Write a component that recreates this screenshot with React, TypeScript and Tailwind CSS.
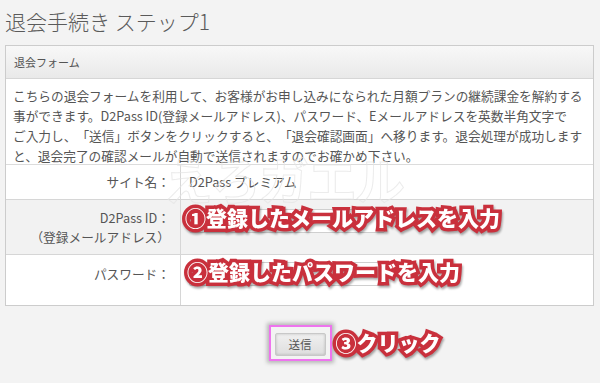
const jp = "font-['Noto_Sans_CJK_JP','Noto_Sans',sans-serif] [text-spacing-trim:space-all]";

const note =
  "font-['Noto_Sans_CJK_JP',sans-serif] font-black text-white whitespace-nowrap [-webkit-text-stroke:7px_#c9303c] [paint-order:stroke_fill] [filter:drop-shadow(1px_2px_1px_rgba(0,0,0,0.35))]";

function Field() {
  return <div className="h-[24px] w-[196px] border border-[#cfcfcf] bg-white rounded-[2px]" />;
}

export default function App() {
  return (
    <div className={`${jp} w-[600px] h-[383px] bg-[#f3f3f3] text-[#555] overflow-hidden relative`}>
      <h1 className="px-[5px] pt-[6px] h-[45px] text-[21px] leading-[30px] text-[#5a5a5a] font-light">
        退会手続き ステップ1
      </h1>

      <div className="mx-[5px] w-[589px] border border-[#cccccc] bg-white">
        <div className="h-[33px] flex items-center px-[8px] text-[11px] text-[#555] bg-gradient-to-b from-[#f8f8f8] to-[#e9e9e9] border-b border-[#d6d6d6]">
          退会フォーム
        </div>

        <div className="h-[86px] px-[7px] pt-[7px] text-[12.7px] leading-[20px] text-[#555] border-b border-[#dcdcdc]">
          <p className="whitespace-nowrap">こちらの退会フォームを利用して、お客様がお申し込みになられた月額プランの継続課金を解約する</p>
          <p className="whitespace-nowrap">事ができます。D2Pass ID(登録メールアドレス)、パスワード、Eメールアドレスを英数半角文字で</p>
          <p className="whitespace-nowrap">ご入力し、「送信」ボタンをクリックすると、「退会確認画面」へ移ります。退会処理が成功します</p>
          <p className="whitespace-nowrap">と、退会完了の確認メールが自動で送信されますのでお確かめ下さい。</p>
        </div>

        <div className="grid grid-cols-[175px_1fr] text-[12.7px]">
          <div className="h-[35px] flex items-center justify-end pr-[10px] border-r border-b border-[#d6d6d6]">
            サイト名：
          </div>
          <div className="h-[35px] flex items-center pl-[8px] border-b border-[#d6d6d6]">
            D2Pass プレミアム
          </div>

          <div className="h-[55px] bg-[#f2f2f2] flex flex-col items-end justify-center pr-[10px] leading-[19px] border-r border-b border-[#d6d6d6]">
            <span>D2Pass ID：</span>
            <span>（登録メールアドレス）</span>
          </div>
          <div className="h-[55px] bg-[#f2f2f2] pl-[8px] pt-[9px] border-b border-[#d6d6d6] relative">
            <Field />
            <span className={`${note} absolute left-[4px] top-[2px] text-[21px] leading-[30px]`}>
              ①登録したメールアドレスを入力
            </span>
          </div>

          <div className="h-[50px] flex items-start pt-[9px] justify-end pr-[10px] border-r border-[#d6d6d6]">
            パスワード：
          </div>
          <div className="h-[50px] pl-[8px] pt-[7px] relative">
            <Field />
            <span className={`${note} absolute left-[6px] top-[1px] text-[21px] leading-[30px]`}>
              ②登録したパスワードを入力
            </span>
          </div>
        </div>
      </div>

      <div className="flex justify-center pt-[19px] pl-[0px]">
        <div className="relative">
          <div className="border-[2px] border-[#ee74ee] px-[4px] py-[3px] shadow-[0_0_4px_2px_rgba(0,0,0,0.25)] bg-[#f3f3f3]">
            <button className="h-[23px] w-[51px] text-[11.5px] text-[#555] bg-gradient-to-b from-[#f0f0f0] to-[#dedede] border border-[#c8c8c8] shadow-[inset_0_0_3px_rgba(0,0,0,0.2)] rounded-[2px]">
              送信
            </button>
          </div>
          <span className={`${note} absolute left-[67px] top-[2px] text-[21px] leading-[30px]`}>
            ③クリック
          </span>
        </div>
      </div>

      <div className="absolute left-[163px] top-[152px] text-[50px] leading-[52px] font-bold text-transparent [-webkit-text-stroke:1px_#e4e4e4] opacity-70 tracking-[-2px] whitespace-nowrap pointer-events-none">
        えろガエル
      </div>
    </div>
  );
}
